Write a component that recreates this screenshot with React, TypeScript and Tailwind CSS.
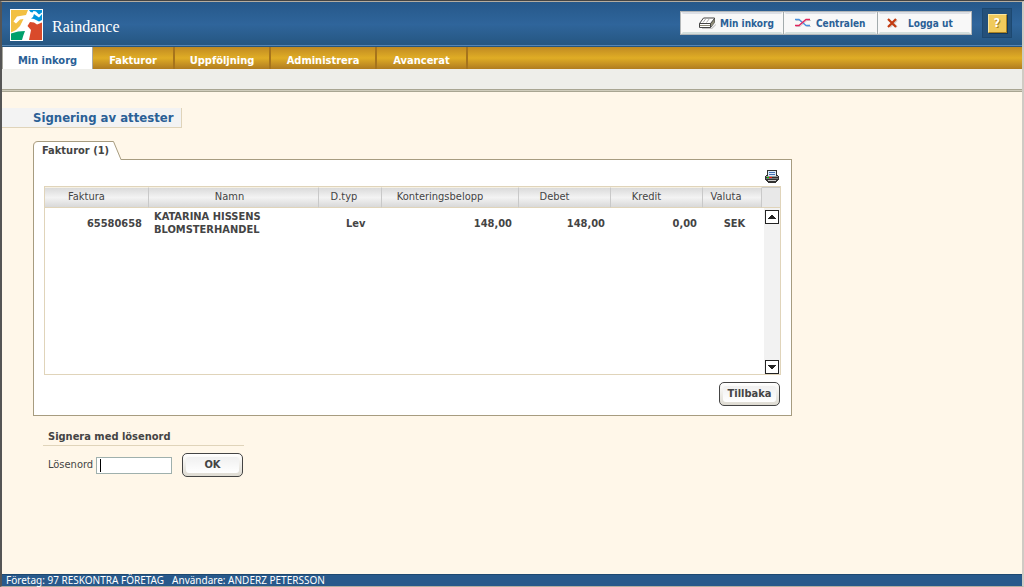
import { useState } from 'react';

interface NavTab {
  label: string;
  width: string;
}

interface Invoice {
  number: string;
  name: string;
  type: string;
  amount: string;
  debit: string;
  credit: string;
  currency: string;
}

const tabs: NavTab[] = [
  { label: 'Min inkorg', width: 'w-[91px]' },
  { label: 'Fakturor', width: 'w-[82px]' },
  { label: 'Uppföljning', width: 'w-[96px]' },
  { label: 'Administrera', width: 'w-[106px]' },
  { label: 'Avancerat', width: 'w-[91px]' },
];

const columns = [
  { label: 'Faktura', width: 'w-[104px]', pad: 'pr-5' },
  { label: 'Namn', width: '', pad: 'pr-2' },
  { label: 'D.typ', width: 'w-[63px]', pad: 'pr-3' },
  { label: 'Konteringsbelopp', width: 'w-[137px]', pad: 'pr-5' },
  { label: 'Debet', width: 'w-[92px]', pad: 'pr-5' },
  { label: 'Kredit', width: 'w-[92px]', pad: 'pr-5' },
  { label: 'Valuta', width: 'w-[59px]', pad: 'pr-3' },
];

const invoices: Invoice[] = [
  {
    number: '65580658',
    name: 'KATARINA HISSENS BLOMSTERHANDEL',
    type: 'Lev',
    amount: '148,00',
    debit: '148,00',
    credit: '0,00',
    currency: 'SEK',
  },
];

function Logo() {
  return (
    <svg viewBox="0 0 33 32" className="h-8 w-[33px] shrink-0" aria-hidden="true">
      <path fill="#fff" d="M0 0h33v32H0z" />
      <path fill="#f2c043" d="M1 1h17l-2 5-9 1.500-3.500 5 2.500 2 4-4 3.500-.5-3.500 7-4 4-5 2.500z" />
      <path fill="#0095dc" d="M19 1h13v2.500l-3 2-3-3-2.500-.5-1 1.500-2-.5z" />
      <path fill="#0095dc" d="M24 5l2 1.500 3 2 3-3.500v6l-3 1.500-5-2.500-3-.5 2-1.500z" />
      <path fill="#d94a2b" d="M20 13l4 .5 3 2 5-2V31H19l2-10-3.500-4z" />
      <path fill="#00a06c" d="M1 24.500l7-2 7-.5-1.500 4L12 31H1z" />
    </svg>
  );
}

function TrayIcon() {
  return (
    <svg viewBox="0 0 17 12" className="h-3 w-[17px] shrink-0" aria-hidden="true">
      <path fill="#c4c4c4" d="M3 11h9l5-4v1l-4 4H3z" />
      <path fill="#fff" stroke="#444" d="M.5 6.500l4-5.500h11v4.500l-4 5H.5z" />
      <path fill="#8c8a76" d="M11.500 6.500l4-5v4l-4 4.500z" />
      <path fill="#8c8a76" d="M1 8h10v1H1z" />
      <path fill="none" stroke="#444" d="M.5 6.500h11M11.500 6.500v4M11.500 6.500l4-5" />
      <path fill="none" stroke="#aaa" d="M4 5.500l3-4M7.500 5.500l3-4" />
    </svg>
  );
}

function CrossingIcon() {
  return (
    <svg viewBox="0 0 17 10" className="h-[10px] w-[17px] shrink-0" fill="none" aria-hidden="true">
      <path stroke="#cfcfcf" d="M1 2.500h4l7 6h4M1 8.500h4l7-6h4" />
      <path stroke="#4a90dc" strokeWidth="1.300" d="M0 1.500h4l7 6h4" />
      <path stroke="#e0235c" strokeWidth="1.300" d="M0 7.500h4l7-6h4" />
    </svg>
  );
}

function CloseIcon() {
  return (
    <svg viewBox="0 0 11 10" className="h-[10px] w-[11px] shrink-0" fill="none" aria-hidden="true">
      <path stroke="#d3cec9" strokeWidth="2" d="M2 2l8 7M10 2L3 9" />
      <path stroke="#c23a10" strokeWidth="2.200" d="M1 1l8 8M9 1L1 9" />
    </svg>
  );
}

function PrinterIcon() {
  return (
    <svg viewBox="0 0 14 13" className="h-[13px] w-[14px]" shapeRendering="crispEdges" aria-hidden="true">
      <path fill="#333" d="M2 0h10v5h1v1h1v4h-1v1h-1v1h-1v1H3v-1H2v-1H1v-1H0V6h1V5h1z" />
      <path fill="#dcebfa" d="M3 1h8v5H3z" />
      <path fill="#4773b5" d="M4 2h6v1H4zM4 4h6v1H4z" />
      <path fill="#9a9a9a" d="M1 6h12v1H1z" />
      <path fill="#777" d="M1 8h12v1H1z" />
      <path fill="#0c0" d="M2 7h2v1H2z" />
      <path fill="#e11" d="M4 7h3v1H4z" />
      <path fill="#ccc" d="M3 10h8v1H3z" />
    </svg>
  );
}

function ArrowButton({ down = false }: { down?: boolean }) {
  return (
    <button
      type="button"
      aria-label={down ? 'Rulla ned' : 'Rulla upp'}
      className="flex h-[14px] w-[14px] items-center justify-center border border-[#222] bg-white"
    >
      <svg viewBox="0 0 8 4" className="h-1 w-2" shapeRendering="crispEdges" aria-hidden="true">
        <path fill="#222" d={down ? 'M0 0h8v1H7v1H6v1H5v1H3V3H2V2H1V1H0z' : 'M3 0h2v1h1v1h1v1h1v1H0V3h1V2h1V1h1z'} />
      </svg>
    </button>
  );
}

function FormButton({ label }: { label: string }) {
  return (
    <button
      type="button"
      className="flex h-6 w-[61px] items-center justify-center rounded-[5px] border border-[#444] bg-linear-to-b from-white to-[#dedbd2] p-[3px] text-[11px] font-bold"
    >
      <span className="flex h-full w-full items-center justify-center rounded-[3px] bg-linear-to-b from-[#f0f0f0] to-white">
        {label}
      </span>
    </button>
  );
}

function Header() {
  const tool =
    'flex h-[22px] items-center border-2 border-[#f8f8f8] border-t-[#dcdfe5] border-b-[#d3dedd] bg-[#f8f8f8] text-[10px] font-bold text-[#2a6096]';
  return (
    <header className="flex h-[45px] items-start bg-linear-to-b from-[#26588a] via-[#2f659b] to-[#25557f] pl-2 shadow-[inset_0_-1px_0_#25557f,inset_0_-2px_0_#5686b4]">
      <div className="flex items-center gap-[9px] pt-[7px]">
        <Logo />
        <span className="pt-1 font-['Liberation_Serif',serif] text-[16px] leading-7 text-white">Raindance</span>
      </div>
      <div className="ml-auto flex items-start gap-[10px] pt-[6px] pr-[10px]">
        <nav className="mt-[3px] flex gap-px border border-[#b3b7b9] bg-[#a3abad]">
          <button type="button" className={`${tool} w-[102px] gap-1 pl-4`}>
            <TrayIcon />
            Min inkorg
          </button>
          <button type="button" className={`${tool} w-[93px] gap-1 pl-[9px]`}>
            <CrossingIcon />
            Centralen
          </button>
          <button type="button" className={`${tool} w-[93px] gap-[10px] pl-[7px]`}>
            <CloseIcon />
            Logga ut
          </button>
        </nav>
        <div className="flex h-[30px] w-[30px] items-center justify-center border border-[#1d4870] bg-[#24507a]">
          <button
            type="button"
            aria-label="Hjälp"
            className="h-[19px] w-[19px] border border-[#fbe6a0] border-r-[#a98223] border-b-[#a98223] bg-[#f0ca5c] text-[12px] leading-4 font-bold text-white shadow-[1px_1px_0_#14385a] text-shadow-[1px_1px_0_#a98223]"
          >
            ?
          </button>
        </div>
      </div>
    </header>
  );
}

function MainNav() {
  return (
    <>
      <nav className="flex h-[22px] bg-linear-to-b from-[#c08a22] via-[#e0ad25] to-[#b07c20] text-[11px] font-bold">
        {tabs.map((tab, i) => (
          <a
            key={tab.label}
            href="#"
            className={`${tab.width} text-center leading-[27px] ${
              i === 0 ? 'border-x border-[#a9a9a0] bg-white text-[#2a6096]' : 'border-r-2 border-[#a6741c] text-white'
            }`}
          >
            {tab.label}
          </a>
        ))}
      </nav>
      <div className="h-[23px] border-b border-[#a8a592] bg-[#eeeeea] shadow-[inset_0_-1px_0_#cfccbc,inset_0_-2px_0_#a8a592]" />
    </>
  );
}

function InvoiceTable() {
  return (
    <table className="w-full table-fixed border-separate border-spacing-0 text-[11px]">
      <thead>
        <tr className="h-[21px] bg-linear-to-b from-[#d8d8d8] via-[#f3f3f3] to-[#d6d6d6]">
          {columns.map((col) => (
            <th
              key={col.label}
              className={`${col.width} ${col.pad} border-t border-r border-b border-t-[#f6f1e4] border-r-[#c9c9c9] border-b-[#e0d4ba] py-0 pl-0 font-normal`}
            >
              {col.label}
            </th>
          ))}
        </tr>
      </thead>
      <tbody className="leading-[13px] font-bold">
        {invoices.map((inv) => (
          <tr key={inv.number}>
            <td className="py-[2px] pr-[7px] text-right">{inv.number}</td>
            <td className="py-[2px] pr-10 pl-[5px]">{inv.name}</td>
            <td className="py-[2px] pl-[27px]">{inv.type}</td>
            <td className="py-[2px] pr-[7px] text-right">{inv.amount}</td>
            <td className="py-[2px] pr-[6px] text-right">{inv.debit}</td>
            <td className="py-[2px] pr-[6px] text-right">{inv.credit}</td>
            <td className="py-[2px] pl-1 text-center">{inv.currency}</td>
          </tr>
        ))}
      </tbody>
    </table>
  );
}

function InvoicePanel() {
  return (
    <section>
      <div className="relative z-10 -mb-px h-[19px] w-[89px] pl-[9px]">
        <svg viewBox="0 0 89 19" className="absolute inset-0 h-[19px] w-[89px]" aria-hidden="true">
          <path fill="#fff" d="M.5 19V5L4.500.5H80L88 19z" />
          <path fill="none" stroke="#a79c80" d="M.5 19V5Q.5.5 5 .5h75.500l7.500 18" />
        </svg>
        <h2 className="relative pt-[2px] text-[11px] leading-4 font-bold whitespace-nowrap">Fakturor (1)</h2>
      </div>
      <div className="border border-[#a79c80] bg-white px-[10px] pt-[10px] pb-[9px]">
        <div className="flex justify-end pr-[2px] pb-[3px]">
          <button type="button" aria-label="Skriv ut">
            <PrinterIcon />
          </button>
        </div>
        <div className="flex h-[189px] border border-[#e0d4ba]">
          <div className="flex-1">
            <InvoiceTable />
          </div>
          <div className="flex w-[18px] flex-col">
            <div className="h-[21px] border-t border-b border-t-[#c9c9c9] border-b-[#e0d4ba] bg-[#e8e8e8]" />
            <div className="ml-[2px] flex flex-1 flex-col items-center justify-between bg-[#f2f2f2] pt-[2px]">
              <ArrowButton />
              <ArrowButton down />
            </div>
          </div>
        </div>
        <div className="flex justify-end pt-[7px] pr-px">
          <FormButton label="Tillbaka" />
        </div>
      </div>
    </section>
  );
}

function SignForm() {
  const [password, setPassword] = useState('');
  return (
    <form className="mt-[13px] pl-[10px] text-[11px]" onSubmit={(e) => e.preventDefault()}>
      <h2 className="w-[201px] border-b border-[#e0d4ba] pl-[5px] leading-4 font-bold">Signera med lösenord</h2>
      <div className="flex items-center pt-[7px] pl-[5px]">
        <label htmlFor="password" className="w-12">
          Lösenord
        </label>
        <div className="relative">
          <input
            id="password"
            type="password"
            value={password}
            onChange={(e) => setPassword(e.target.value)}
            className="block h-[17px] w-[76px] border border-[#9fb0ad] bg-white px-1 outline-none"
          />
          {password === '' && <span className="absolute top-[2px] left-1 h-[13px] w-px bg-black" />}
        </div>
        <div className="ml-[10px]">
          <FormButton label="OK" />
        </div>
      </div>
    </form>
  );
}

export default function App() {
  return (
    <div className="min-h-screen border-t border-[#444] bg-[#fff7e9] font-['DejaVu_Sans_Condensed','DejaVu_Sans',sans-serif] text-[#444]">
      <div className="flex min-h-[calc(100vh-1px)] flex-col border-t border-r-2 border-b border-l-2 border-t-[#b5ada0] border-r-[#cfcbc4] border-b-[#b5ada0] border-l-[#555]">
        <Header />
        <MainNav />
        <main className="flex flex-1 flex-col items-start pt-4">
          <h1 className="border-r border-b border-[#e0d4ba] bg-[#f3f3f3] pr-2 pl-[31px] text-[13px] leading-[19px] font-bold text-[#2a6096]">
            Signering av attester
          </h1>
          <div className="w-full max-w-[790px] pt-[13px] pl-[31px]">
            <InvoicePanel />
            <SignForm />
          </div>
        </main>
        <footer className="flex h-3 gap-2 border-t border-[#1d4870] bg-[#28598b] pl-1 font-['Noto_Sans',sans-serif] text-[10px] leading-[11px] text-white">
          <span>Företag: 97 RESKONTRA FÖRETAG</span>
          <span>Användare: ANDERZ PETERSSON</span>
        </footer>
      </div>
    </div>
  );
}
